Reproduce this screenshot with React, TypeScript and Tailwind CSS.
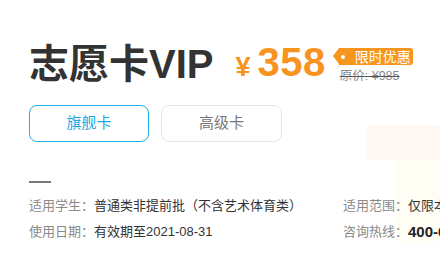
import React from 'react';

const font = { fontFamily: '"Liberation Sans", "Noto Sans CJK SC", sans-serif' };

interface InfoRowProps {
  label: string;
  children: React.ReactNode;
}

const InfoRow: React.FC<InfoRowProps> = ({ label, children }) => (
  <div className="flex items-center h-[26px] whitespace-nowrap text-[13px]">
    <span className="text-[#8a8a8a]">{label}：</span>
    <span className="text-[#333]">{children}</span>
  </div>
);

export default function App() {
  return (
    <div className="relative w-[440px] h-[277px] overflow-hidden bg-white" style={font}>
      {/* faint decoration behind the right side */}
      <div className="absolute left-[367px] top-[125px] w-[120px] h-[35px] bg-[#fdf8f3]" />
      <div className="absolute left-[396px] top-[160px] w-[100px] h-[82px] bg-[#fffdf4]" />

      <div className="relative pl-[29px] pt-[40px]">
        <div className="flex items-center">
          <h1 className="text-[40px] leading-[48px] font-bold text-[#333] whitespace-nowrap">志愿卡VIP</h1>
          <div className="ml-[22px] flex items-baseline font-bold text-[#f7931e] whitespace-nowrap">
            <span className="text-[27px] mr-[7px]">¥</span>
            <span className="text-[40px] leading-[44px] tracking-[0.5px]">358</span>
          </div>
          <div className="ml-[13px] flex flex-col items-start mt-[4px]">
            <div className="relative flex items-center h-[17px] pl-[16px] pr-[2px] bg-[#f7961f] rounded-r-[3px] text-white text-[14px] leading-none whitespace-nowrap">
              <span className="absolute left-[-6px] top-0 w-0 h-0 border-y-[8.5px] border-y-transparent border-r-[6px] border-r-[#f7961f]" />
              <span className="absolute left-[2px] top-[6.5px] w-[4px] h-[4px] rounded-full bg-white" />
              限时优惠
            </div>
            <div className="mt-[3px] ml-[1px] text-[12.5px] leading-[16px] text-[#8a8a8a] line-through decoration-[#555] whitespace-nowrap">
              原价: ¥985
            </div>
          </div>
        </div>

        <div className="mt-[17px] flex gap-[12px]">
          <button className="w-[120px] h-[37px] rounded-[8px] border border-[#1cb0ea] text-[15px] text-[#1aa7e2]">
            旗舰卡
          </button>
          <button className="w-[121px] h-[37px] rounded-[8px] border border-[#e6e6e6] text-[15px] text-[#777]">
            高级卡
          </button>
        </div>

        <div className="mt-[39px] w-[22px] h-[2px] bg-[#7a7a7a]" />

        <div className="mt-[10px] flex">
          <div className="w-[314px] shrink-0">
            <InfoRow label="适用学生">普通类非提前批（不含艺术体育类）</InfoRow>
            <InfoRow label="使用日期">有效期至2021-08-31</InfoRow>
          </div>
          <div className="shrink-0">
            <InfoRow label="适用范围">仅限本科批次</InfoRow>
            <InfoRow label="咨询热线">
              <span className="text-[15px] font-bold text-[#222]">400-6655-360</span>
            </InfoRow>
          </div>
        </div>
      </div>
    </div>
  );
}
